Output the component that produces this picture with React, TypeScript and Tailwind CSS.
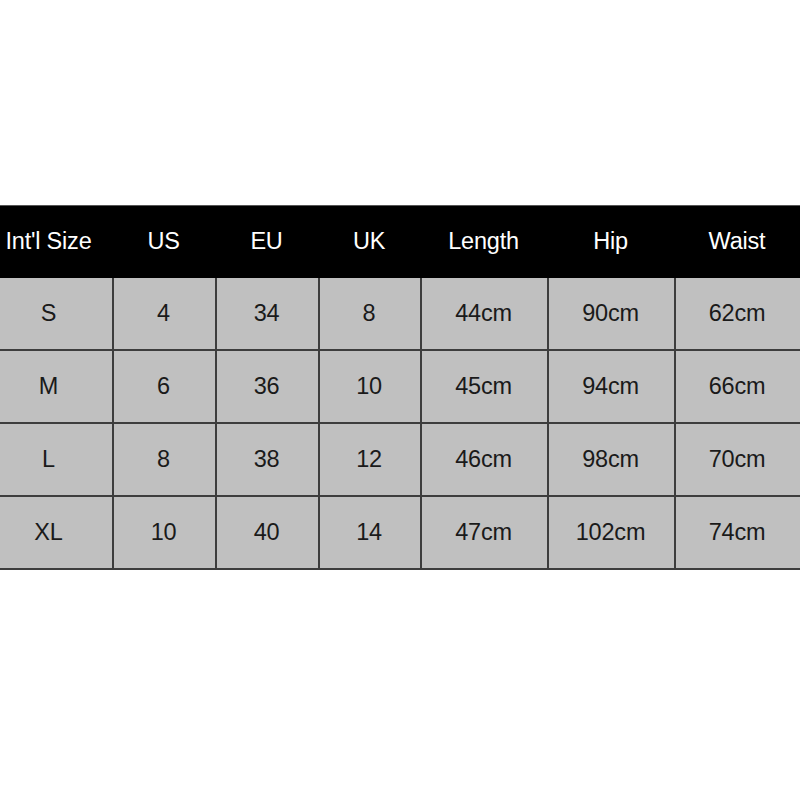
const headers = ["Int'l Size", 'US', 'EU', 'UK', 'Length', 'Hip', 'Waist'];

const rows = [
  ['S', '4', '34', '8', '44cm', '90cm', '62cm'],
  ['M', '6', '36', '10', '45cm', '94cm', '66cm'],
  ['L', '8', '38', '12', '46cm', '98cm', '70cm'],
  ['XL', '10', '40', '14', '47cm', '102cm', '74cm'],
];

const cols = 'grid-cols-[112px_101px_101px_100px_125px_125px_124px]';

export default function App() {
  return (
    <div className="w-[800px] h-[800px] bg-white pt-[205px] font-['Liberation_Sans',Arial,sans-serif]">
      <div className={`grid ${cols} gap-x-[2px] h-[73px] bg-black border-t border-[#555]`}>
        {headers.map((h, i) => (
          <div
            key={h}
            className={`flex items-center justify-center text-[23.5px] tracking-[-0.2px] text-white ${i === 0 ? 'pr-[15px]' : 'pr-[2px]'}`}
          >
            {h}
          </div>
        ))}
      </div>
      <div className={`grid ${cols} gap-[2px] bg-[#3d3d3d] pb-[2px]`}>
        {rows.map((r) =>
          r.map((c, i) => (
            <div
              key={r[0] + i}
              className={`h-[71px] bg-[#c0c0c0] flex items-center justify-center text-[23.5px] tracking-[-0.2px] text-[#1a1a1a] ${i === 0 ? 'pr-[15px]' : 'pr-[2px]'}`}
            >
              {c}
            </div>
          ))
        )}
      </div>
    </div>
  );
}
